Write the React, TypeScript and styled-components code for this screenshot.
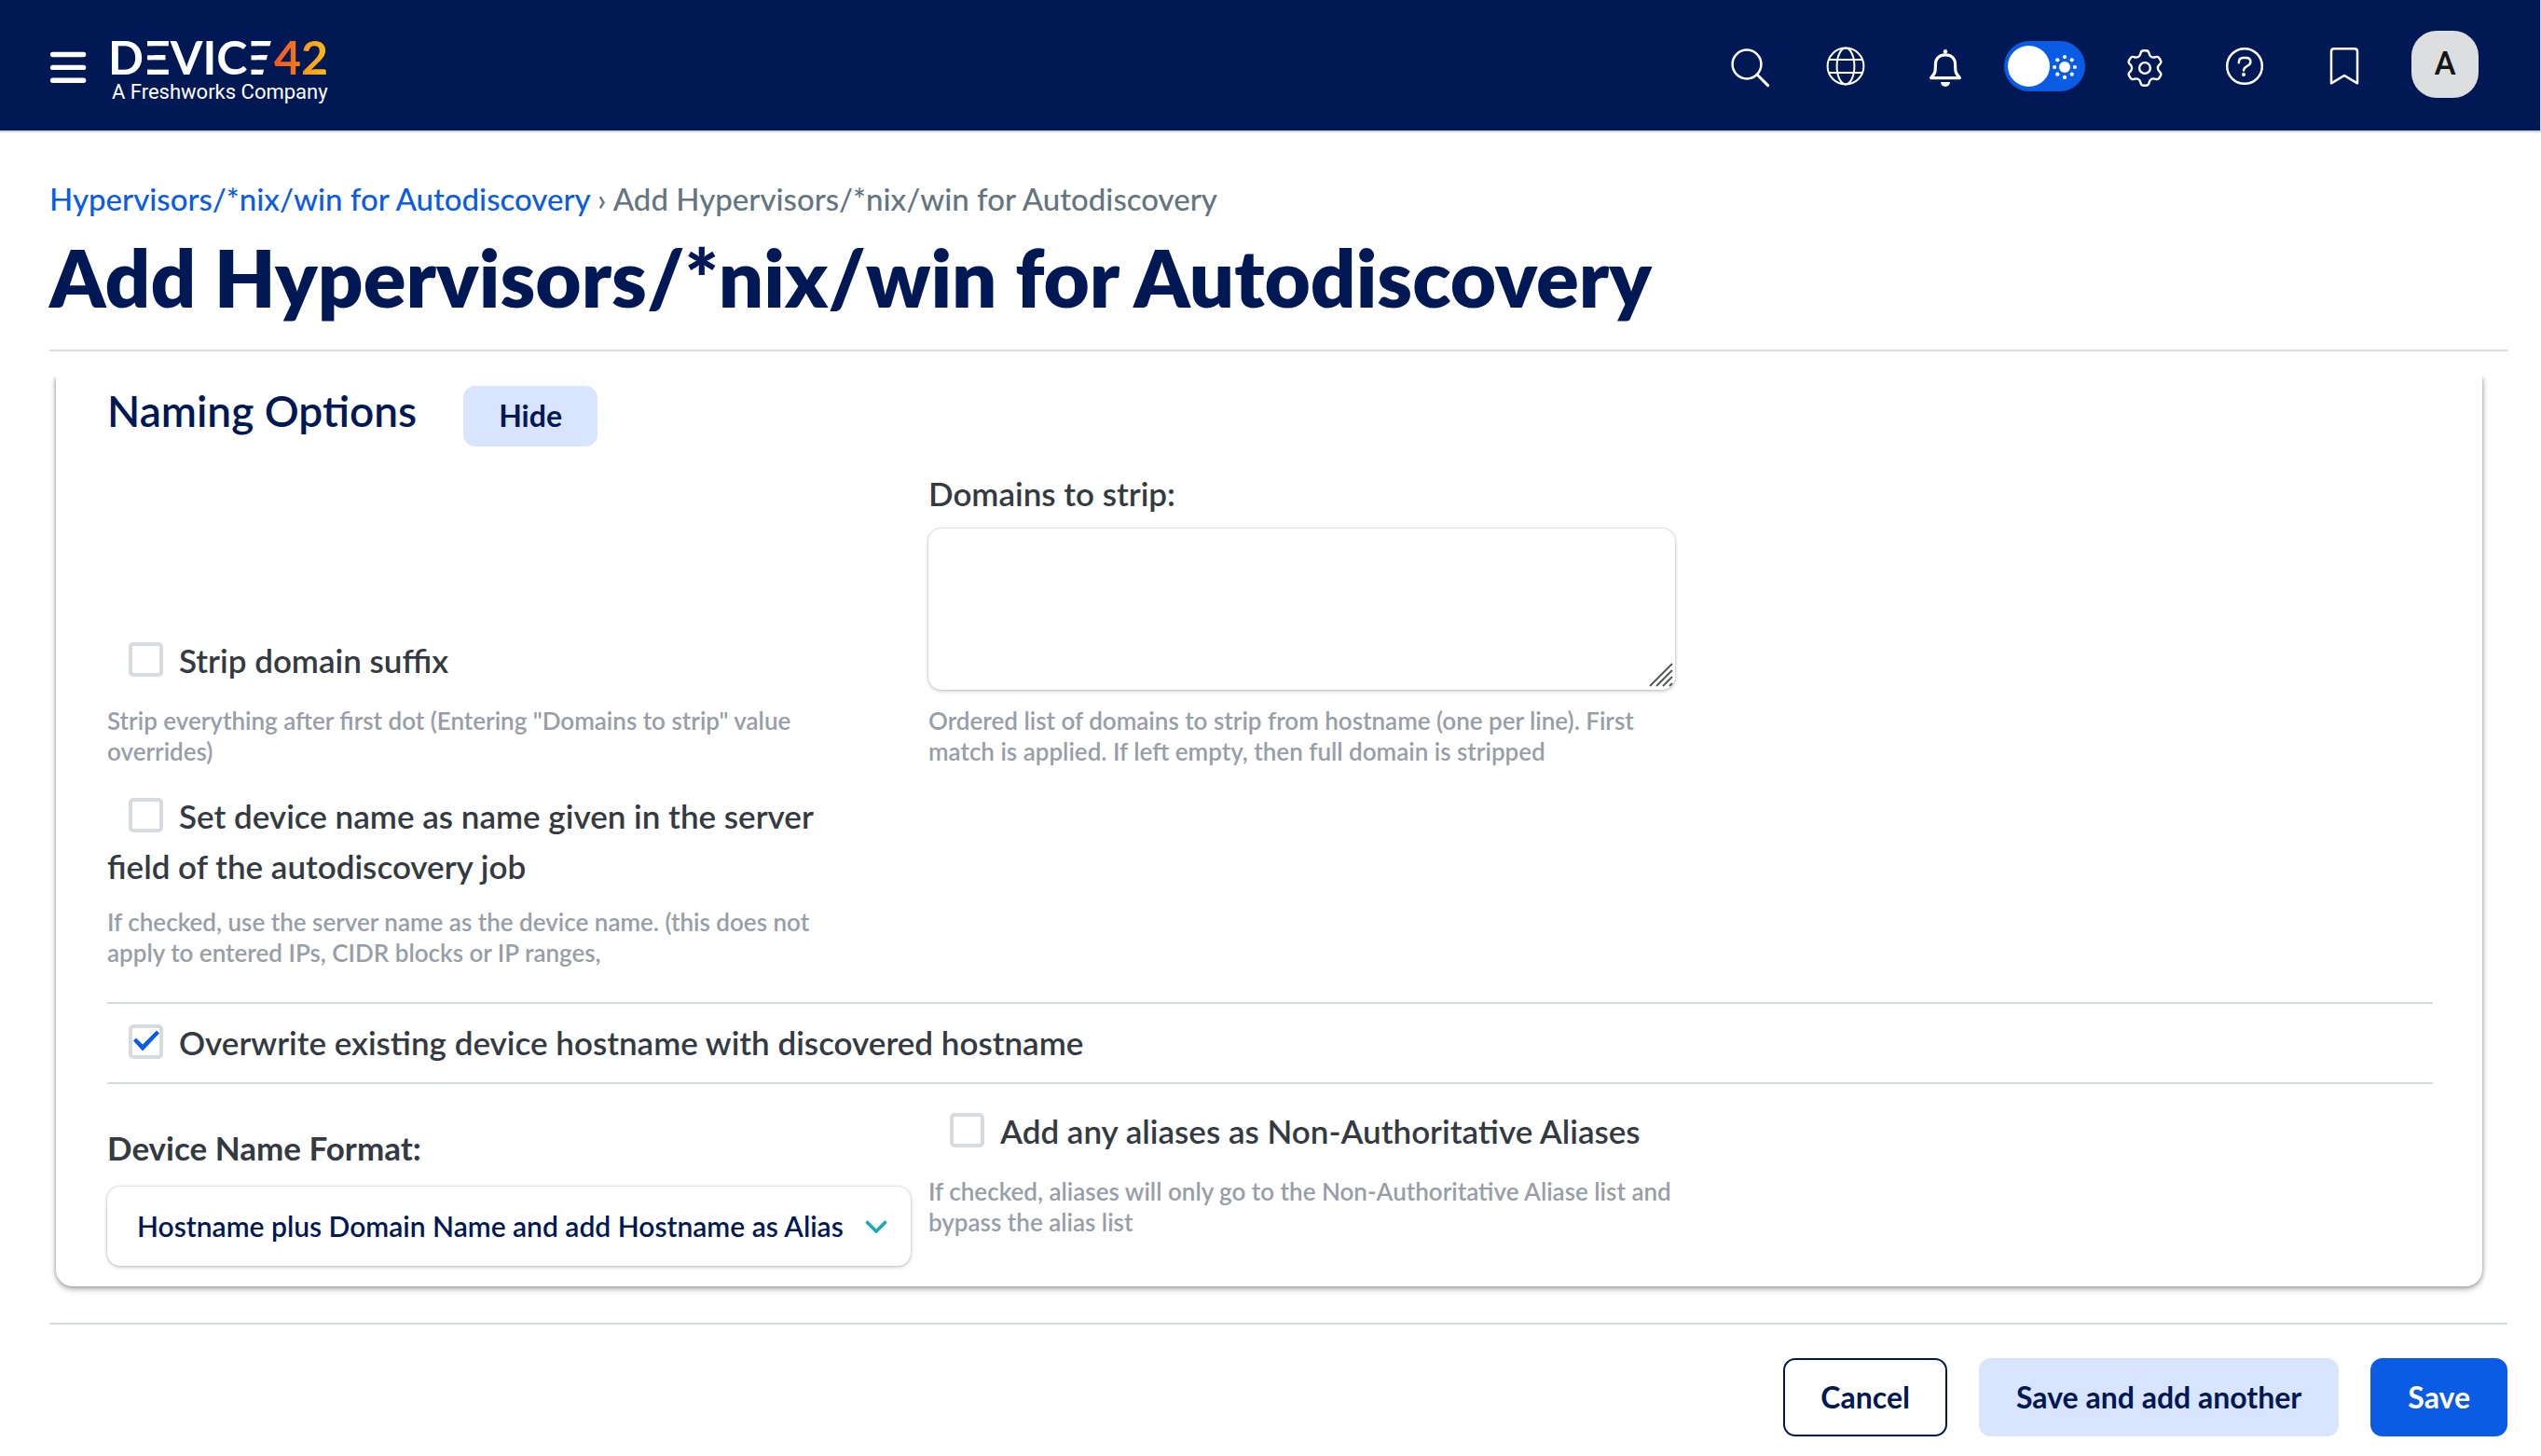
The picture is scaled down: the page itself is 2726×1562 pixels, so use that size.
import React, { useState } from 'react';
import styled, { createGlobalStyle, css } from 'styled-components';

const navy = '#001854';
const blue = '#0a5ce5';
const paleBlue = '#d9e4ff';
const ink = '#343a42';
const muted = '#989ea7';
const line = '#d6dbdf';
const fieldShadow = '0 2px 4px rgba(0, 0, 0, 0.14), 0 0 3px rgba(0, 0, 0, 0.26)';

const GlobalStyle = createGlobalStyle`
  *, *::before, *::after { box-sizing: border-box; }
  body { margin: 0; background: #fff; color: ${ink}; font-family: Lato, "Open Sans", sans-serif; }
  button, input, select, textarea { font-family: inherit; margin: 0; }
  button { cursor: pointer; }
`;

const Page = styled.div`
  display: flex;
  flex-direction: column;
  min-height: 100vh;
`;

/* ---------- top bar ---------- */

const TopBar = styled.header`
  display: flex;
  align-items: center;
  justify-content: space-between;
  height: 142px;
  padding: 0 66px 0 53px;
  background: ${navy};
  border-bottom: 2px solid #d8d9dc;
  border-right: 1px solid #d8d9dc;
`;

const Brand = styled.div`
  display: flex;
  align-items: center;
  gap: 22px;
`;

const PlainButton = styled.button`
  display: flex;
  padding: 0;
  border: 0;
  background: none;
  color: #fff;
`;

const BrandLink = styled.a`
  display: block;
  color: #fff;
  text-decoration: none;
`;

const Tools = styled.div`
  display: flex;
  align-items: center;
`;

const ToolCell = styled.div<{ $narrow?: boolean }>`
  display: flex;
  justify-content: center;
  width: ${(p) => (p.$narrow ? 96 : 107)}px;
`;

const Avatar = styled.button`
  width: 72px;
  height: 72px;
  margin: 0 0 3px 19px;
  padding: 0;
  border: 0;
  border-radius: 27px;
  background: #dddee0;
  color: #161616;
  font: 500 35px/72px Roboto, sans-serif;
`;

const Toggle = styled.label`
  position: relative;
  display: block;
  width: 87px;
  height: 54px;
  margin-top: 2px;
`;

const ToggleInput = styled.input`
  appearance: none;
  display: block;
  width: 100%;
  height: 100%;
  border-radius: 27px;
  background: ${blue};

  &::before {
    content: '';
    position: absolute;
    top: 5px;
    left: 4px;
    width: 45px;
    height: 44px;
    border-radius: 50%;
    background: #fff;
  }
`;

const ToggleSun = styled.svg`
  position: absolute;
  top: 14px;
  right: 8px;
`;

type Point = [number, number];

function roundedOutline(points: Point[], radius: number): string {
  const n = points.length;
  const toward = (a: Point, b: Point): Point => {
    const len = Math.hypot(b[0] - a[0], b[1] - a[1]);
    const t = Math.min(radius / len, 0.5);
    return [a[0] + (b[0] - a[0]) * t, a[1] + (b[1] - a[1]) * t];
  };
  const f = (p: Point) => `${p[0].toFixed(2)} ${p[1].toFixed(2)}`;
  return (
    points
      .map((p, i) => {
        const from = toward(p, points[(i + n - 1) % n]);
        const to = toward(p, points[(i + 1) % n]);
        return `${i ? 'L' : 'M'}${f(from)}Q${f(p)} ${f(to)}`;
      })
      .join('') + 'Z'
  );
}

const gearPoints: Point[] = Array.from({ length: 6 }, (_, k) => {
  const a = (k * Math.PI) / 3;
  const tooth: Point[] = [[-5.2, -13], [-3.8, -18.7], [3.8, -18.7], [5.2, -13]];
  return tooth.map(([x, y]): Point => [
    x * Math.cos(a) - y * Math.sin(a),
    x * Math.sin(a) + y * Math.cos(a),
  ]);
}).flat();
const gearPath = roundedOutline(gearPoints, 2.6);

const Icon = ({ children, width = 2.5 }: { children: React.ReactNode; width?: number }) => (
  <svg width="56" height="56" viewBox="0 0 56 56" fill="none" stroke="#fff" strokeWidth={width} strokeLinejoin="round" aria-hidden="true">
    {children}
  </svg>
);

const Logo = () => (
  <svg width="248" height="84" viewBox="0 0 248 84" fontFamily="Lato, sans-serif" fontWeight="700" fontSize="50" role="img" aria-label="Device42, a Freshworks company">
    <defs>
      <linearGradient id="brand42" gradientUnits="userSpaceOnUse" x1="180" y1="0" x2="236" y2="0">
        <stop offset="0" stopColor="#ef5a24" />
        <stop offset="0.35" stopColor="#f36f21" />
        <stop offset="0.6" stopColor="#f99b1c" />
        <stop offset="1" stopColor="#fdb913" />
      </linearGradient>
    </defs>
    <text x="1" y="53" fill="#fff">DEVICE</text>
    {/* cut-outs that leave each E as three bars, the last one slanted */}
    <g fill={navy}>
      <rect x="42" y="22.4" width="8.5" height="9.9" />
      <rect x="42" y="37.4" width="8.5" height="10.2" />
      <rect x="154" y="22.4" width="8.5" height="9.9" />
      <rect x="154" y="37.4" width="8.5" height="10.2" />
    </g>
    <path d="M182.500 15 172.500 55" stroke={navy} strokeWidth="12" />
    <text x="179" y="53" fill="url(#brand42)">42</text>
    <text x="5" y="79" fill="#fff" fontFamily="Roboto, sans-serif" fontWeight="400" fontSize="22">
      A Freshworks Company
    </text>
  </svg>
);

/* ---------- page heading ---------- */

const Main = styled.main`
  display: flex;
  flex: 1;
  flex-direction: column;
  padding: 51px 36px 21px 53px;
`;

const Breadcrumb = styled.nav`
  color: #64757f;
  font-size: 33px;
  font-weight: 500;
  line-height: 40px;
`;

const CrumbLink = styled.a`
  color: ${blue};
  text-decoration: none;
`;

const Title = styled.h1`
  margin: 12px 0 27px;
  padding-bottom: 26px;
  border-bottom: 2px solid ${line};
  color: ${navy};
  font-size: 85px;
  font-weight: 800;
  line-height: 104px;
`;

/* ---------- form card ---------- */

const CardViewport = styled.div`
  flex: 1;
  overflow: hidden;
  padding: 0 27px 38px 7px;
`;

const Card = styled.form`
  padding: 9px 53px 22px 55px;
  border-radius: 0 0 18px 18px;
  background: #fff;
  box-shadow: 0 3px 6px rgba(0, 0, 0, 0.3), 0 0 4px rgba(0, 0, 0, 0.25);
`;

const SectionHead = styled.div`
  display: flex;
  align-items: baseline;
  gap: 50px;
  margin-bottom: 23px;
`;

const SectionTitle = styled.h2`
  margin: 0;
  color: ${navy};
  font-size: 46px;
  font-weight: 600;
  line-height: 56px;
`;

const Row = styled.div<{ $align?: string; $ruled?: boolean; $pad?: string }>`
  display: grid;
  grid-template-columns: 881fr 1614fr;
  align-items: ${(p) => p.$align ?? 'start'};
  padding: ${(p) => p.$pad ?? '0'};
  ${(p) => p.$ruled && css`border-bottom: 2px solid ${line};`}
`;

const Field = styled.div<{ $wide?: boolean; $lowered?: boolean }>`
  max-width: ${(p) => (p.$wide ? 1200 : 801)}px;
  padding-top: ${(p) => (p.$lowered ? 18 : 0)}px;
`;

const FullField = styled.div`
  grid-column: 1 / -1;
`;

const labelText = css`
  display: block;
  color: ${ink};
  font-size: 35px;
  font-weight: 600;
  line-height: 54px;
`;

const FieldLabel = styled.label<{ $strong?: boolean }>`
  ${labelText}
  ${(p) => p.$strong && css`font-weight: 700;`}
`;

const CheckLabel = styled.label`
  ${labelText}
`;

const CheckBox = styled.input`
  appearance: none;
  display: inline-block;
  width: 37px;
  height: 37px;
  margin: 0 17px 0 23px;
  border: 4px solid ${line};
  border-radius: 5px;
  background: #fff;
  vertical-align: -4px;

  &:checked::before {
    content: '';
    display: block;
    width: 29px;
    height: 29px;
    background: ${blue};
    clip-path: polygon(1px 14px, 4px 11px, 11px 18px, 26px 3px, 29px 6px, 11px 25px);
  }
`;

const Help = styled.p<{ $tight?: boolean }>`
  margin: ${(p) => (p.$tight ? 17 : 22)}px 0 0;
  color: ${muted};
  font-size: 26px;
  font-weight: 600;
  line-height: 33px;
`;

const AreaWrap = styled.div`
  position: relative;
  margin-top: 11px;
`;

const TextArea = styled.textarea`
  display: block;
  width: 100%;
  height: 173px;
  padding: 16px;
  border: 0;
  border-radius: 14px;
  background: #fff;
  box-shadow: ${fieldShadow};
  color: ${navy};
  font-size: 30px;
  resize: none;
`;

const Grip = styled.svg`
  position: absolute;
  right: 2px;
  bottom: 2px;
  pointer-events: none;
`;

const SelectWrap = styled.div`
  position: relative;
  width: 862px;
  margin-top: 15px;
`;

const Select = styled.select`
  appearance: none;
  display: block;
  width: 100%;
  height: 85px;
  padding: 0 60px 0 32px;
  border: 0;
  border-radius: 14px;
  background: #fff;
  box-shadow: ${fieldShadow};
  color: ${navy};
  font-size: 30px;
  font-weight: 600;
`;

const Chevron = styled.svg`
  position: absolute;
  top: 34px;
  right: 24px;
  pointer-events: none;
`;

/* ---------- buttons ---------- */

const Button = styled.button<{ $kind: 'outline' | 'soft' | 'solid'; $small?: boolean }>`
  height: ${(p) => (p.$small ? 65 : 84)}px;
  padding: 0 ${(p) => (p.$small ? 36 : 38)}px;
  border: 2px solid transparent;
  border-radius: 13px;
  font-size: 32px;
  font-weight: 700;
  line-height: 40px;
  ${(p) => p.$kind === 'outline' && css`border-color: ${navy}; background: #fff; color: ${navy};`}
  ${(p) => p.$kind === 'soft' && css`border-color: ${paleBlue}; background: ${paleBlue}; color: ${navy};`}
  ${(p) => p.$kind === 'solid' && css`border-color: ${blue}; background: ${blue}; color: #fff;`}
`;

const Actions = styled.footer`
  display: flex;
  justify-content: flex-end;
  gap: 34px;
  padding-top: 36px;
  border-top: 2px solid ${line};
`;

const Check = ({ id, children, initial = false }: { id: string; children: React.ReactNode; initial?: boolean }) => {
  const [on, setOn] = useState(initial);
  return (
    <CheckLabel htmlFor={id}>
      <CheckBox id={id} type="checkbox" checked={on} onChange={(e) => setOn(e.target.checked)} />
      {children}
    </CheckLabel>
  );
};

const sunRays = Array.from({ length: 8 }, (_, i) => (i * Math.PI) / 4);

export default function App() {
  return (
    <Page>
      <GlobalStyle />
      <TopBar>
        <Brand>
          <PlainButton type="button" aria-label="Open menu">
            <svg width="40" height="44" viewBox="0 0 40 44" stroke="#fff" strokeWidth="5.4" strokeLinecap="round" aria-hidden="true">
              <path d="M3.6 10.5h33M3.6 24.4h33M3.6 38.3h33" />
            </svg>
          </PlainButton>
          <BrandLink href="#home"><Logo /></BrandLink>
        </Brand>
        <Tools>
          <ToolCell $narrow>
            <PlainButton type="button" aria-label="Search">
              <Icon><circle cx="24" cy="27" r="15.4" /><path d="M35 38l11.6 11.6" strokeWidth="3" strokeLinecap="round" /></Icon>
            </PlainButton>
          </ToolCell>
          <ToolCell>
            <PlainButton type="button" aria-label="Language">
              <Icon width={2}>
                <circle cx="28" cy="29" r="19.4" />
                <ellipse cx="28" cy="29" rx="9.4" ry="19.4" />
                <path d="M10 22h36M10 36h36" />
              </Icon>
            </PlainButton>
          </ToolCell>
          <ToolCell>
            <PlainButton type="button" aria-label="Notifications">
              <Icon width={3.2}>
                <path d="M28 16.8c-7 0-10.6 4.4-10.6 10.6 0 8.4-.6 9.4-4.8 14.2h30.8c-4.2-4.8-4.8-5.8-4.8-14.2 0-6.2-3.6-10.6-10.6-10.6Z" />
                <circle cx="28" cy="13.2" r="2.2" fill="#fff" stroke="none" />
                <path d="M23 46h10a5 5 0 0 1-10 0Z" fill="#fff" stroke="none" />
              </Icon>
            </PlainButton>
          </ToolCell>
          <ToolCell>
            <Toggle>
              <ToggleInput type="checkbox" role="switch" aria-label="Light theme" defaultChecked />
              <ToggleSun width="28" height="28" viewBox="0 0 28 28" fill="#fff" aria-hidden="true">
                <circle cx="14" cy="14" r="6" />
                {sunRays.map((a) => (
                  <circle key={a} cx={14 + 10.9 * Math.cos(a)} cy={14 + 10.9 * Math.sin(a)} r="2.1" />
                ))}
              </ToggleSun>
            </Toggle>
          </ToolCell>
          <ToolCell>
            <PlainButton type="button" aria-label="Settings">
              <Icon width={2.4}>
                <g transform="translate(28 31)">
                  <path d={gearPath} />
                  <circle r="5.9" />
                </g>
              </Icon>
            </PlainButton>
          </ToolCell>
          <ToolCell>
            <PlainButton type="button" aria-label="Help">
              <Icon>
                <circle cx="28" cy="29" r="18.8" />
                <path d="M21.8 25.2c0-3.600 2-5.200 4.800-5.200h3c3 0 4.800 1.800 4.800 4.300 0 5.400-7.400 4-7.400 9.200" strokeLinecap="round" />
                <circle cx="27" cy="38" r="2" fill="#fff" stroke="none" />
              </Icon>
            </PlainButton>
          </ToolCell>
          <ToolCell>
            <PlainButton type="button" aria-label="Bookmarks">
              <Icon><path d="M14 47.3V13.200q0-3 3-3h22q3 0 3 3v34.100l-14-8.300Z" /></Icon>
            </PlainButton>
          </ToolCell>
          <Avatar type="button" aria-label="Account A">A</Avatar>
        </Tools>
      </TopBar>

      <Main>
        <Breadcrumb aria-label="Breadcrumb">
          <CrumbLink href="#list">Hypervisors/*nix/win for Autodiscovery</CrumbLink> › Add Hypervisors/*nix/win for Autodiscovery
        </Breadcrumb>
        <Title>Add Hypervisors/*nix/win for Autodiscovery</Title>

        <CardViewport>
          <Card id="naming" onSubmit={(e) => e.preventDefault()}>
            <SectionHead>
              <SectionTitle>Naming Options</SectionTitle>
              <Button type="button" $kind="soft" $small>Hide</Button>
            </SectionHead>

            <Row $align="end">
              <Field>
                <Check id="strip-suffix">Strip domain suffix</Check>
                <Help>Strip everything after first dot (Entering "Domains to strip" value overrides)</Help>
              </Field>
              <Field>
                <FieldLabel htmlFor="domains">Domains to strip:</FieldLabel>
                <AreaWrap>
                  <TextArea id="domains" />
                  <Grip width="26" height="28" viewBox="0 0 26 28" stroke="#55585c" strokeWidth="2" aria-hidden="true">
                    <path d="M1 26 25 2M8 26 25 9M15 26l10-10M22 26l3-3" />
                  </Grip>
                </AreaWrap>
                <Help $tight>Ordered list of domains to strip from hostname (one per line). First match is applied. If left empty, then full domain is stripped</Help>
              </Field>
            </Row>

            <Row $pad="25px 0 36px" $ruled>
              <Field>
                <Check id="server-name">Set device name as name given in the server field of the autodiscovery job</Check>
                <Help $tight>If checked, use the server name as the device name. (this does not apply to entered IPs, CIDR blocks or IP ranges,</Help>
              </Field>
            </Row>

            <Row $pad="14px 0 16px" $ruled>
              <FullField>
                <Check id="overwrite" initial>Overwrite existing device hostname with discovered hostname</Check>
              </FullField>
            </Row>

            <Row $pad="23px 0 0">
              <Field $wide $lowered>
                <FieldLabel htmlFor="name-format" $strong>Device Name Format:</FieldLabel>
                <SelectWrap>
                  <Select id="name-format">
                    <option>Hostname plus Domain Name and add Hostname as Alias</option>
                  </Select>
                  <Chevron width="26" height="20" viewBox="0 0 26 20" fill="none" stroke="#1aa9b8" strokeWidth="3.6" strokeLinecap="round" aria-hidden="true">
                    <path d="M3.500 4.500 13 14l9.500-9.500" />
                  </Chevron>
                </SelectWrap>
              </Field>
              <Field>
                <Check id="aliases">Add any aliases as Non-Authoritative Aliases</Check>
                <Help>If checked, aliases will only go to the Non-Authoritative Aliase list and bypass the alias list</Help>
              </Field>
            </Row>
          </Card>
        </CardViewport>

        <Actions>
          <Button type="button" $kind="outline">Cancel</Button>
          <Button type="submit" form="naming" $kind="soft">Save and add another</Button>
          <Button type="submit" form="naming" $kind="solid">Save</Button>
        </Actions>
      </Main>
    </Page>
  );
}
